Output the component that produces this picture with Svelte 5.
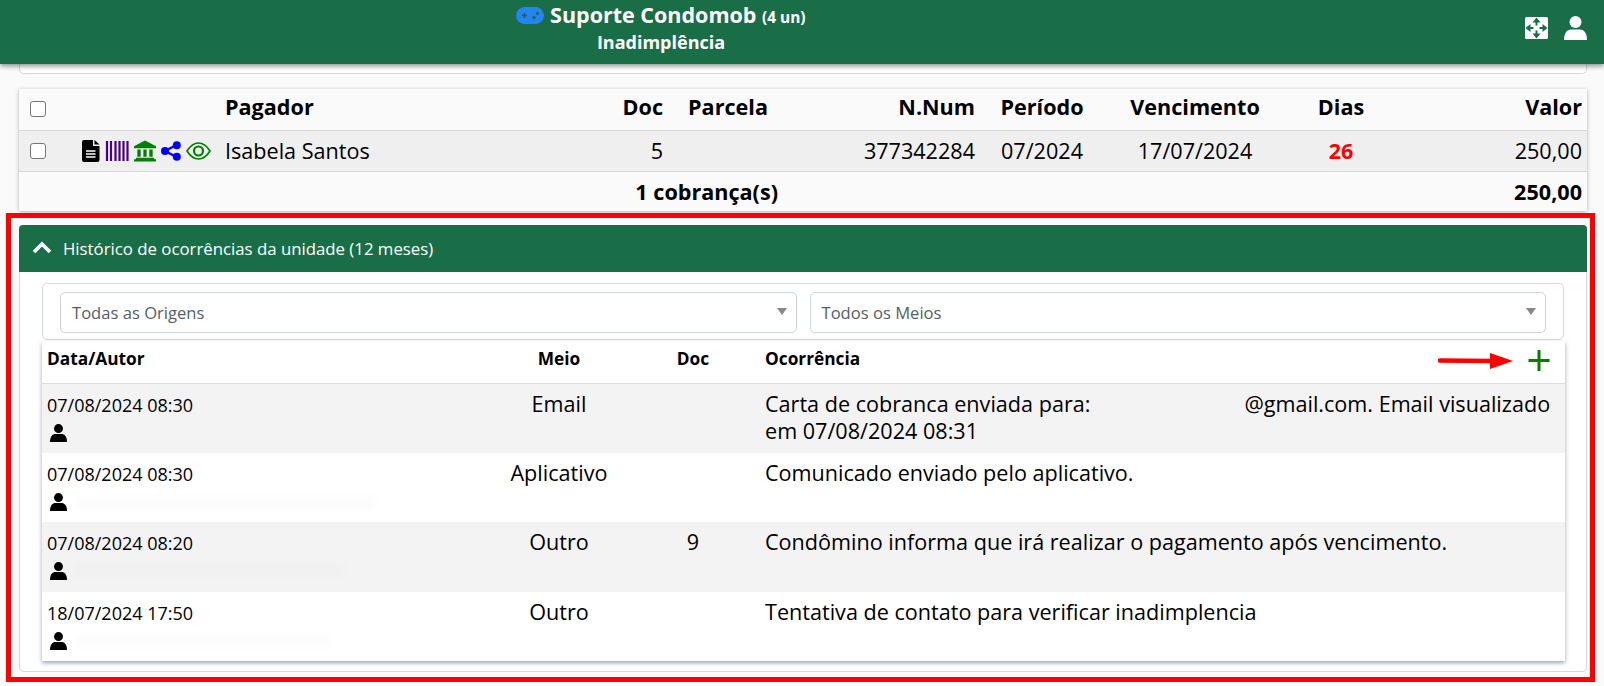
<script>
  const rows = [
    { date: '07/08/2024 08:30', meio: 'Email', doc: '', email: true, blur: 0 },
    { date: '07/08/2024 08:30', meio: 'Aplicativo', doc: '', text: 'Comunicado enviado pelo aplicativo.', blur: 300 },
    { date: '07/08/2024 08:20', meio: 'Outro', doc: '9', text: 'Condômino informa que irá realizar o pagamento após vencimento.', blur: 270 },
    { date: '18/07/2024 17:50', meio: 'Outro', doc: '', text: 'Tentativa de contato para verificar inadimplencia', blur: 255 }
  ];
</script>

{#snippet person()}
  <svg class="person" viewBox="0 0 17 18" aria-hidden="true">
    <circle cx="8.500" cy="4.600" r="4.500" />
    <path d="M0 18 C0 12.500 2.500 10 5.500 10 H11.500 C14.500 10 17 12.500 17 18 Z" />
  </svg>
{/snippet}

<header class="topbar">
  <div class="title">
    <div class="title-line">
      <svg class="gamepad" viewBox="0 0 28 17" aria-hidden="true">
        <rect width="28" height="17" rx="8.500" fill="#2484f5" />
        <path d="M6 8.500h5M8.500 6v5" stroke="#1a6e47" stroke-width="1.600" />
        <circle cx="18" cy="10.500" r="1.700" fill="#1a6e47" />
        <circle cx="21.500" cy="6.500" r="1.700" fill="#1a6e47" />
      </svg>
      <b>Suporte Condomob</b> <small>(4 un)</small>
    </div>
    <div class="subtitle">Inadimplência</div>
  </div>
  <div class="top-icons">
    <svg class="expand" viewBox="0 0 23 22" aria-hidden="true">
      <rect width="23" height="22" rx="1.500" fill="#fff" />
      <path d="M11.500 0.500 L15.500 5.500 H12.500 V8.500 H10.500 V5.500 H7.500 Z M11.500 21.500 L15.500 16.500 H12.500 V13.500 H10.500 V16.500 H7.500 Z M0.500 11 L5.500 7 V10 H8.500 V12 H5.500 V15 Z M22.500 11 L17.500 7 V10 H14.500 V12 H17.500 V15 Z" fill="#1a6e47" />
    </svg>
    <svg class="user" viewBox="0 0 23 24" aria-hidden="true">
      <circle cx="11.500" cy="6" r="6" fill="#fff" />
      <path d="M0 24 C0 17 3 13.500 7 13.500 H16 C20 13.500 23 17 23 24 Z" fill="#fff" />
    </svg>
  </div>
</header>

<main class="page">
  <div class="stub"></div>

  <table class="charges">
    <colgroup>
      <col style="width:198px" /><col style="width:330px" /><col style="width:121px" /><col style="width:120px" />
      <col style="width:192px" /><col style="width:124px" /><col style="width:182px" /><col style="width:110px" /><col />
    </colgroup>
    <thead>
      <tr>
        <th class="check"><span class="box"></span></th>
        <th class="left">Pagador</th>
        <th class="right">Doc</th>
        <th>Parcela</th>
        <th class="right">N.Num</th>
        <th>Período</th>
        <th>Vencimento</th>
        <th>Dias</th>
        <th class="right">Valor</th>
      </tr>
    </thead>
    <tbody>
      <tr class="shaded">
        <td class="check">
          <div class="check-cell">
            <span class="box"></span>
            <span class="row-icons">
              <svg width="18" height="22" viewBox="0 0 18 22" aria-hidden="true">
                <path d="M2 0 H11 V6 H17.500 V20 Q17.500 22 15.500 22 H2 Q0 22 0 20 V2 Q0 0 2 0 Z M12.500 0 L17.500 4.500 H12.500 Z" fill="#000" />
                <path d="M4 11h9.500M4 14h9.500M4 17h9.500" stroke="#fff" stroke-width="1.600" />
              </svg>
              <svg width="24" height="20" viewBox="0 0 24 20" aria-hidden="true">
                <path d="M2 0v20M6 0v20M10.500 0v20M14.500 0v20M18.500 0v20M22.500 0v20" stroke="#4b0082" stroke-width="2.200" />
              </svg>
              <svg width="22" height="22" viewBox="0 0 23 22" aria-hidden="true">
                <path d="M11.500 0 L23 6 V8 H0 V6 Z M2 18 H21 V19.500 H23 V22 H0 V19.500 H2 Z M3.500 9.500 H7 V17 H3.500 Z M9.800 9.500 H13.200 V17 H9.800 Z M16 9.500 H19.500 V17 H16 Z" fill="#008000" />
              </svg>
              <svg width="20" height="20" viewBox="0 0 20 20" aria-hidden="true">
                <path d="M15.500 4 L4 10 L15.500 16" stroke="#0000ff" stroke-width="2.400" fill="none" />
                <circle cx="15.800" cy="4.200" r="4" fill="#0000ff" />
                <circle cx="4" cy="10" r="4" fill="#0000ff" />
                <circle cx="15.800" cy="15.800" r="4" fill="#0000ff" />
              </svg>
              <svg width="25" height="18" viewBox="0 0 25 18" aria-hidden="true">
                <path d="M1 9 C4.500 3.500 8.500 1 12.500 1 C16.500 1 20.500 3.500 24 9 C20.500 14.500 16.500 17 12.500 17 C8.500 17 4.500 14.500 1 9 Z" fill="none" stroke="#008000" stroke-width="1.700" />
                <circle cx="12.500" cy="9" r="4.500" fill="none" stroke="#008000" stroke-width="2.200" />
              </svg>
            </span>
          </div>
        </td>
        <td class="left">Isabela Santos</td>
        <td class="right">5</td>
        <td></td>
        <td class="right">377342284</td>
        <td>07/2024</td>
        <td>17/07/2024</td>
        <td class="late">26</td>
        <td class="right">250,00</td>
      </tr>
    </tbody>
    <tfoot>
      <tr>
        <td colspan="4" class="total-label">1 cobrança(s)</td>
        <td colspan="4"></td>
        <td class="right">250,00</td>
      </tr>
    </tfoot>
  </table>

  <section class="history">
    <div class="history-head">
      <svg viewBox="0 0 20 13" aria-hidden="true">
        <path d="M2 11 L10 3 L18 11" fill="none" stroke="#fff" stroke-width="3.600" />
      </svg>
      <span>Histórico de ocorrências da unidade (12 meses)</span>
    </div>
    <div class="history-body">
      <div class="filters">
        <div class="select">Todas as Origens</div>
        <div class="select">Todos os Meios</div>
      </div>
      <table class="events">
        <colgroup>
          <col style="width:450px" /><col style="width:134px" /><col style="width:134px" /><col /><col style="width:60px" />
        </colgroup>
        <thead>
          <tr>
            <th class="left">Data/Autor</th>
            <th>Meio</th>
            <th>Doc</th>
            <th class="left">Ocorrência</th>
            <th class="add">
              <svg viewBox="0 0 21 21" aria-hidden="true"><path d="M10.500 0V21M0 10.500H21" stroke="#008000" stroke-width="3" /></svg>
            </th>
          </tr>
        </thead>
        <tbody>
          {#each rows as row}
            <tr>
              <td class="who">
                <div class="date">{row.date}</div>
                <div class="author">
                  {@render person()}
                  {#if row.blur}<span class="smudge" style="width:{row.blur}px"></span>{/if}
                </div>
              </td>
              <td class="mid">{row.meio}</td>
              <td class="mid">{row.doc}</td>
              <td class="desc" colspan="2">
                {#if row.email}
                  <span>Carta de cobranca enviada para:</span><span class="hidden-mail"></span><span>@gmail.com. Email visualizado</span><br /><span>em 07/08/2024 08:31</span>
                {:else}
                  {row.text}
                {/if}
              </td>
            </tr>
          {/each}
        </tbody>
      </table>
    </div>
  </section>

  <div class="outline"></div>
  <svg class="arrow" viewBox="0 0 76 16" aria-hidden="true">
    <path d="M2 7.500 L54 8" stroke="#ff0000" stroke-width="4.500" stroke-linecap="round" />
    <path d="M52 0 L75 8 L52 16 Z" fill="#ff0000" />
  </svg>
</main>

<style>
  :global(html), :global(body) {
    margin: 0;
    height: 686px;
    overflow: hidden;
    background: #fafafa;
    font-family: "Open Sans", "Noto Sans", sans-serif;
    color: #000;
  }

  .topbar {
    height: 64px;
    background: #1a6e47;
    color: #fff;
    display: flex;
    justify-content: center;
    padding-right: 282px;
    position: relative;
    box-shadow: 0 2px 5px rgba(0, 0, 0, 0.45);
    z-index: 2;
  }
  .title { text-align: center; }
  .title-line { font-size: 21.500px; line-height: 30px; white-space: nowrap; }
  .title-line small { font-size: 15.400px; font-weight: 700; }
  .gamepad { width: 28px; height: 17px; vertical-align: -1px; }
  .subtitle { font-size: 18px; font-weight: 700; line-height: 19px; }
  .top-icons {
    position: absolute;
    right: 17px;
    top: 16px;
    display: flex;
    gap: 16px;
  }
  .expand { width: 23px; height: 22px; margin-top: 1px; }
  .user { width: 23px; height: 24px; }

  .page { position: relative; padding: 0 17px 0 19px; }

  .stub {
    height: 9px;
    background: #fff;
    border: 1px solid #d5d8dd;
    border-top: 0;
    border-radius: 0 0 5px 5px;
  }

  table { border-collapse: collapse; table-layout: fixed; width: 100%; }

  .charges {
    margin-top: 15px;
    font-size: 21.600px;
    box-shadow: 0 1px 4px rgba(0, 0, 0, 0.3);
    background: #fafafa;
  }
  .charges th, .charges td { padding: 0 5px; text-align: center; white-space: nowrap; }
  .charges th { padding-bottom: 6px; }
  .charges thead tr { height: 41px; }
  .charges tbody tr { height: 41px; background: #efefef; border-top: 1px solid #d8d8d8; border-bottom: 1px solid #d8d8d8; }
  .charges tfoot tr { height: 40px; font-weight: 700; }
  .charges th.check { text-align: left; padding: 0 0 6px 11px; }
  .charges td.check { text-align: left; padding: 0 0 0 11px; }
  .charges .left { text-align: left; padding-left: 8px; }
  .charges .right { text-align: right; }
  .charges .total-label { text-align: right; padding-right: 10px; }
  .late { color: #ff0000; font-weight: 700; }

  .box {
    display: inline-block;
    width: 14px;
    height: 14px;
    background: #fff;
    border: 1px solid #767676;
    border-radius: 3px;
    vertical-align: middle;
  }
  .check-cell { display: flex; align-items: center; }
  .row-icons { display: flex; align-items: center; gap: 5px; margin-left: 36px; }

  .history {
    margin-top: 14px;
    background: #fff;
    border: 1px solid #d5d8dd;
    border-radius: 5px;
    height: 447px;
    box-sizing: border-box;
  }
  .history-head {
    height: 47px;
    margin: -1px -1px 0;
    background: #1a6e47;
    color: #fff;
    display: flex;
    align-items: center;
    gap: 11px;
    padding-left: 13px;
    font-size: 16.800px;
    border-radius: 4px 4px 0 0;
  }
  .history-head svg { width: 20px; height: 13px; margin-bottom: 3px; }
  .history-body { padding: 11px 22px 0 22px; }

  .filters {
    display: flex;
    gap: 13px;
    padding: 8px 17px 6px;
    border: 1px solid #d5d8dd;
    border-radius: 5px;
    height: 41px;
  }
  .select {
    flex: 1;
    border: 1px solid #ced4da;
    border-radius: 5px;
    padding-left: 11px;
    font-size: 16.600px;
    color: #555e66;
    line-height: 39px;
    position: relative;
  }
  .select::after {
    content: "";
    position: absolute;
    right: 9px;
    top: 15px;
    border-left: 5px solid transparent;
    border-right: 5px solid transparent;
    border-top: 7px solid #888;
  }

  .events {
    background: #fff;
    font-size: 21.600px;
    width: calc(100% + 1px);
    margin-top: 1px;
    box-shadow: 0 2px 4px rgba(60, 80, 110, 0.5);
  }
  .events th { height: 34px; font-size: 17.300px; padding: 0 0 8px; border-bottom: 1px solid #ddd; vertical-align: middle; }
  .events th.left { text-align: left; padding-left: 5px; }
  .events th.add { text-align: center; padding: 0 0 6px 8px; }
  .events th.add svg { width: 22px; height: 21px; vertical-align: middle; }
  .events tbody tr { height: 69.400px; }
  .events tbody tr:nth-child(odd) { background: #f3f3f3; }
  .events td { vertical-align: top; padding: 6px 5px 0; line-height: 27px; }
  .events td.mid { text-align: center; padding-left: 0; padding-right: 0; }
  .events td.who { padding: 9px 0 0 5px; }
  .events td.desc { padding-right: 14px; }
  .date { font-size: 18px; line-height: 24px; }
  .author { display: flex; align-items: center; height: 24px; margin-top: 4px; }
  .person { width: 17px; height: 18px; fill: #000; margin-left: 3px; flex: none; }
  .smudge { height: 14px; margin-left: 8px; background: rgba(0, 0, 0, 0.012); filter: blur(3px); }
  .hidden-mail { display: inline-block; width: 154px; }

  .outline {
    position: absolute;
    left: 6px;
    top: 149px;
    width: 1579px;
    height: 459px;
    border: 5px solid #ff0000;
    pointer-events: none;
  }
  .arrow { position: absolute; left: 1438px; top: 289px; width: 76px; height: 16px; }
</style>
